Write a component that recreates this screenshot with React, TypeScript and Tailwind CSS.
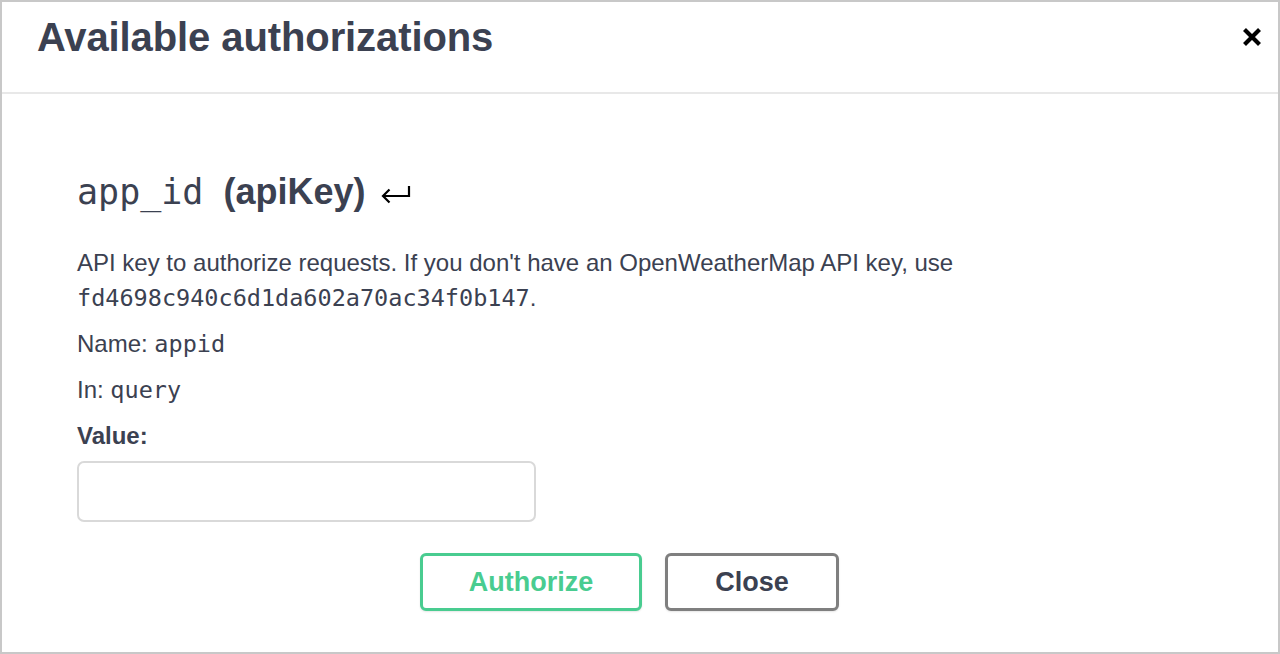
const sans = "font-['Liberation_Sans',Arial,sans-serif]"
const mono = "font-['DejaVu_Sans_Mono',monospace]"

function CloseIcon() {
  return (
    <svg width="20" height="22" viewBox="0 0 20 22" className="mt-[24px]">
      <path d="M2.5 3.5 L17.5 18.5 M17.5 3.5 L2.5 18.5" stroke="#000" strokeWidth="4.2" strokeLinecap="butt" />
    </svg>
  )
}

function ReturnArrow() {
  return (
    <svg width="32" height="22" viewBox="0 0 32 22" className="ml-[15px] mt-[4px]">
      <path d="M29 3 V13 H3" stroke="#000" strokeWidth="2.2" fill="none" />
      <path d="M9.5 6.5 L3 13 L9.5 19.5" stroke="#000" strokeWidth="2.2" fill="none" />
    </svg>
  )
}

export default function App() {
  return (
    <div className={`w-[1280px] h-[654px] border-2 border-[#c8c8c8] bg-white flex flex-col text-[#3b4151] ${sans}`}>
      {/* header */}
      <div className="h-[92px] border-b-2 border-[#e8e8e8] flex justify-between items-start pl-[35px] pr-[16px] shrink-0">
        <h3 className="text-[40px] leading-[48px] font-bold pt-[11px] tracking-[-0.1px]">Available authorizations</h3>
        <CloseIcon />
      </div>

      {/* body */}
      <div className="flex-1 flex flex-col pl-[75px] pr-[75px] pt-[76px]">
        <h4 className="flex items-center h-[44px] text-[36px] leading-[44px] font-bold">
          <span className={`${mono} font-normal text-[35px]`}>app_id</span>
          <span className="ml-[20px]">(apiKey)</span>
          <ReturnArrow />
        </h4>

        <div className="mt-[31px] flex flex-col gap-[11px] text-[24px] leading-[35px]">
          <p className="max-w-[1000px]">
            API key to authorize requests. If you don't have an OpenWeatherMap API key, use{" "}
            <code className={`${mono} text-[23.5px] leading-none`}>fd4698c940c6d1da602a70ac34f0b147</code>.
          </p>
          <p className="h-[35px]">
            Name: <code className={`${mono} text-[23.5px] leading-none`}>appid</code>
          </p>
          <p className="h-[35px]">
            In: <code className={`${mono} text-[23.5px] leading-none`}>query</code>
          </p>
          <label className="font-bold h-[35px]">Value:</label>
        </div>

        <input
          type="text"
          className="mt-[8px] w-[459px] h-[61px] border-2 border-[#d9d9d9] rounded-[7px] outline-none px-3 text-[24px]"
        />

        <div className="mt-[31px] flex justify-center gap-[23px] pr-[21px]">
          <button className="w-[222px] h-[58px] border-[3px] border-[#49cc90] rounded-[6px] text-[#49cc90] text-[27px] font-bold shadow-[0_1px_2px_rgba(0,0,0,0.1)] bg-white">
            Authorize
          </button>
          <button className="w-[174px] h-[58px] border-[3px] border-[#7f7f7f] rounded-[6px] text-[#3b4151] text-[27px] font-bold shadow-[0_1px_2px_rgba(0,0,0,0.1)] bg-white">
            Close
          </button>
        </div>
      </div>
    </div>
  )
}
